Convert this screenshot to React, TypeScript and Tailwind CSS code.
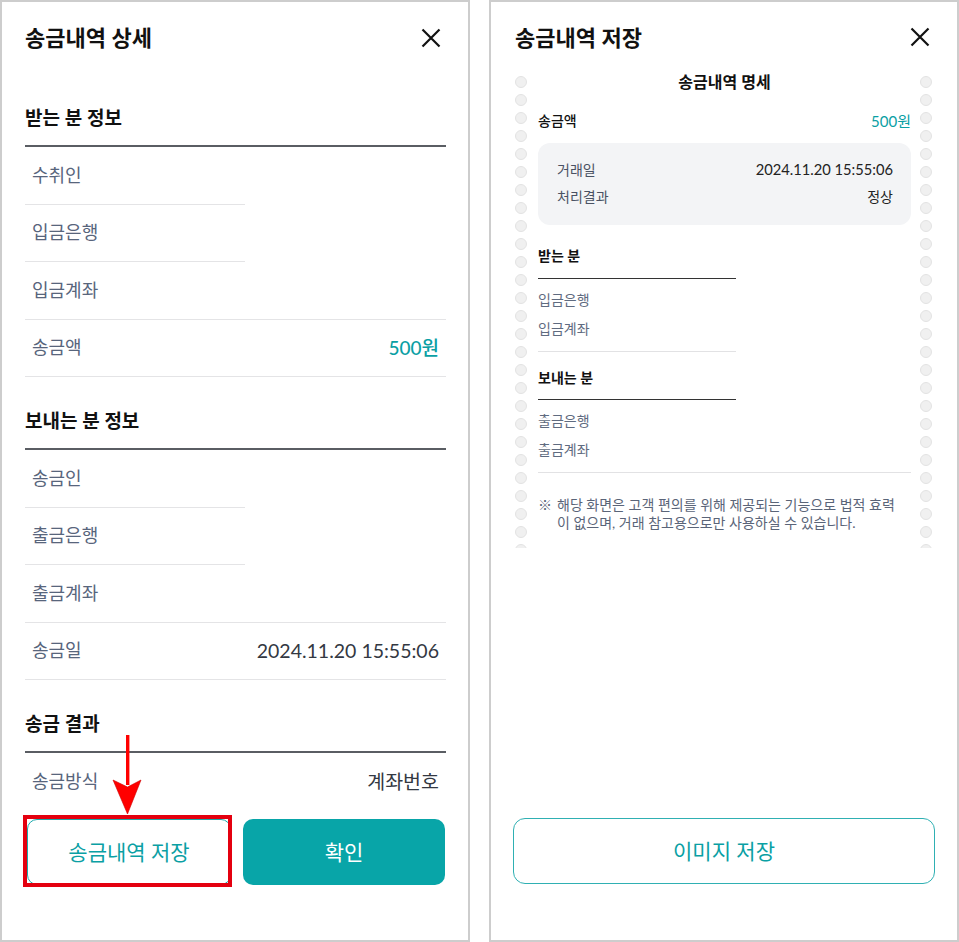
import React from "react";

const FONT = "font-['Lato','Noto_Sans_CJK_KR',sans-serif]";

function XIcon() {
  return (
    <svg width="20" height="20" viewBox="0 0 20 20" fill="none">
      <path d="M1.5 1.5 L18.5 18.5 M18.5 1.5 L1.5 18.5" stroke="#111" strokeWidth="2.2" strokeLinecap="butt" />
    </svg>
  );
}

function Row({ label, value, teal, full }: { label: string; value?: string; teal?: boolean; full?: boolean }) {
  return (
    <>
      <div className="flex h-[56.5px] items-center justify-between pl-[7px] pr-[7px]">
        <span className="text-[18px] text-[#58657c]">{label}</span>
        {value && (
          <span className={teal ? "text-[19px] font-medium text-[#0aa0a4]" : "text-[19.5px] text-[#333842]"}>{value}</span>
        )}
      </div>
      <div className={full ? "h-px bg-[#e4e4e6]" : "h-px w-[220px] bg-[#e4e4e6]"} />
    </>
  );
}

function SectionTitle({ title, mt }: { title: string; mt: string }) {
  return (
    <div className={`${mt} border-b-2 border-[#5a5d63] pb-[14px]`}>
      <h2 className="text-[19px] leading-[26px] font-semibold text-[#111]">{title}</h2>
    </div>
  );
}

function Dots() {
  return (
    <div className="flex w-[12px] flex-col gap-[6px] pt-[4px]">
      {Array.from({ length: 27 }).map((_, i) => (
        <div key={i} className="h-[12px] w-[12px] shrink-0 rounded-full border border-[#e3e3e3] bg-[#f0f0f0]" />
      ))}
    </div>
  );
}

function LeftPanel() {
  return (
    <div className="relative h-[942px] w-[470px] shrink-0 overflow-hidden border-2 border-[#cdcdcd] bg-white">
      <header className="flex h-[71px] items-center justify-between pl-[23px] pr-[27px]">
        <h1 className="text-[22px] font-semibold text-[#111]">송금내역 상세</h1>
        <XIcon />
      </header>
      <div className="pl-[23px] pr-[22px]">
        <SectionTitle title="받는 분 정보" mt="mt-[32px]" />
        <Row label="수취인" />
        <Row label="입금은행" />
        <Row label="입금계좌" full />
        <Row label="송금액" value="500원" teal full />
        <SectionTitle title="보내는 분 정보" mt="mt-[31px]" />
        <Row label="송금인" />
        <Row label="출금은행" />
        <Row label="출금계좌" full />
        <Row label="송금일" value="2024.11.20 15:55:06" full />
        <SectionTitle title="송금 결과" mt="mt-[31px]" />
        <Row label="송금방식" value="계좌번호" full />
      </div>

      <div className="absolute inset-x-0 bottom-0">
        <div className="h-[16px] bg-gradient-to-b from-white/0 to-white" />
        <div className="flex gap-[12px] bg-white pl-[25px] pr-[23px] pt-[12px] pb-[55px]">
          <button className="flex h-[66px] flex-1 items-center justify-center rounded-[10px] border border-[#1aa9ac] bg-white text-[21px] text-[#0aa0a4]">
            송금내역 저장
          </button>
          <button className="flex h-[66px] flex-1 items-center justify-center rounded-[10px] bg-[#08a5a8] text-[21px] text-white">
            확인
          </button>
        </div>
      </div>

      <div className="absolute left-[21px] top-[813px] h-[72px] w-[209px] border-[4px] border-[#e4000f]" />
      <svg className="absolute left-[108px] top-[731px]" width="34" height="84" viewBox="0 0 34 84">
        <rect x="16" y="2" width="3.4" height="50" fill="#f00" />
        <path d="M3 47 L17.5 81 L31 47 L17.5 54 Z" fill="#f00" stroke="#c00" strokeWidth="0.6" />
      </svg>
    </div>
  );
}

function RightPanel() {
  return (
    <div className="flex h-[942px] w-[470px] shrink-0 flex-col border-2 border-[#cdcdcd] bg-white">
      <header className="flex h-[70px] shrink-0 items-center justify-between pl-[24px] pr-[27px]">
        <h1 className="text-[22px] font-semibold text-[#111]">송금내역 저장</h1>
        <XIcon />
      </header>
      <div className="flex h-[476px] shrink-0 overflow-hidden pl-[24px] pr-[25px]">
        <Dots />
        <div className="ml-[11px] mr-[9px] flex-1">
          <div className="text-center text-[16px] leading-[20px] font-semibold text-[#111]">송금내역 명세</div>
          <div className="mt-[19px] flex items-center justify-between leading-[20px]">
            <span className="text-[14px] font-medium text-[#111]">송금액</span>
            <span className="text-[15px] text-[#0aa0a4]">500원</span>
          </div>
          <div className="mt-[12px] rounded-[12px] bg-[#f3f4f6] pl-[19px] pr-[18px] pt-[13px] pb-[15px]">
            <div className="flex h-[27px] items-center justify-between">
              <span className="text-[14px] text-[#4a5263]">거래일</span>
              <span className="text-[14.7px] text-[#222]">2024.11.20 15:55:06</span>
            </div>
            <div className="flex h-[27px] items-center justify-between">
              <span className="text-[14px] text-[#4a5263]">처리결과</span>
              <span className="text-[14px] text-[#222]">정상</span>
            </div>
          </div>

          <div className="mt-[21px] w-[198px] border-b-[1.5px] border-[#333] pb-[12px]">
            <div className="text-[14px] leading-[20px] font-semibold text-[#111]">받는 분</div>
          </div>
          <div className="mt-[6px]">
            <div className="flex h-[29px] items-center text-[14px] text-[#5f6b80]">입금은행</div>
            <div className="flex h-[29px] items-center text-[14px] text-[#5f6b80]">입금계좌</div>
          </div>
          <div className="mt-[8px] h-px w-[198px] bg-[#e2e2e4]" />

          <div className="mt-[16px] w-[198px] border-b-[1.5px] border-[#333] pb-[11px]">
            <div className="text-[14px] leading-[20px] font-semibold text-[#111]">보내는 분</div>
          </div>
          <div className="mt-[6px]">
            <div className="flex h-[29px] items-center text-[14px] text-[#5f6b80]">출금은행</div>
            <div className="flex h-[29px] items-center text-[14px] text-[#5f6b80]">출금계좌</div>
          </div>
          <div className="mt-[8px] h-px bg-[#e2e2e4]" />

          <div className="mt-[23px] flex text-[14px] leading-[18px] text-[#5a6478]">
            <span className="w-[19px] shrink-0">※</span>
            <span className="whitespace-nowrap">
              해당 화면은 고객 편의를 위해 제공되는 기능으로 법적 효력
              <br />
              이 없으며, 거래 참고용으로만 사용하실 수 있습니다.
            </span>
          </div>
        </div>
        <Dots />
      </div>
      <div className="mt-auto px-[22px] pb-[56px]">
        <button className="flex h-[66px] w-full items-center justify-center rounded-[12px] border-[1.5px] border-[#2fb0b3] bg-white text-[21px] text-[#0aa0a4]">
          이미지 저장
        </button>
      </div>
    </div>
  );
}

export default function App() {
  return (
    <div className={`${FONT} flex h-[942px] w-[959px] justify-between bg-white`}>
      <LeftPanel />
      <RightPanel />
    </div>
  );
}
